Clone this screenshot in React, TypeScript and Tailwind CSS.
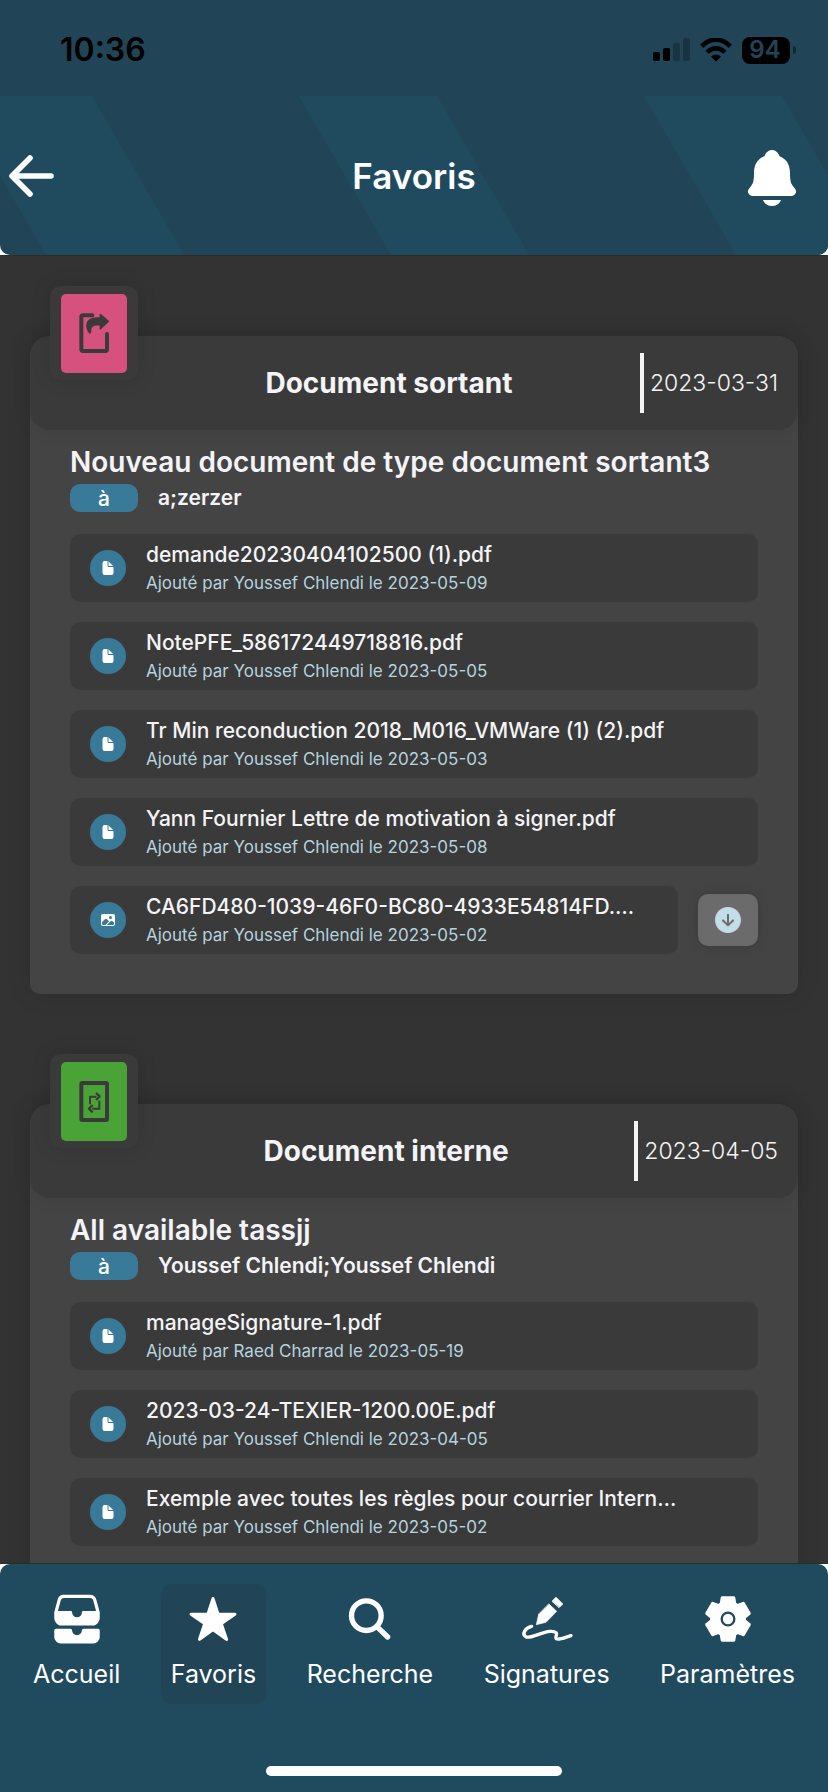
import { type ReactNode } from "react";
import {
  IoArrowDownCircle,
  IoDocument,
  IoFileTrayStacked,
  IoImage,
  IoNotifications,
  IoStar,
} from "react-icons/io5";

type Attachment = { name: string; author: string; date: string; image?: boolean };

type Entry = {
  kind: "outgoing" | "internal";
  label: string;
  date: string;
  title: string;
  recipients: string;
  files: Attachment[];
};

const entries: Entry[] = [
  {
    kind: "outgoing",
    label: "Document sortant",
    date: "2023-03-31",
    title: "Nouveau document de type document sortant3",
    recipients: "a;zerzer",
    files: [
      { name: "demande20230404102500 (1).pdf", author: "Youssef Chlendi", date: "2023-05-09" },
      { name: "NotePFE_586172449718816.pdf", author: "Youssef Chlendi", date: "2023-05-05" },
      { name: "Tr Min reconduction 2018_M016_VMWare (1) (2).pdf", author: "Youssef Chlendi", date: "2023-05-03" },
      { name: "Yann Fournier Lettre de motivation à signer.pdf", author: "Youssef Chlendi", date: "2023-05-08" },
      { name: "CA6FD480-1039-46F0-BC80-4933E54814FD.…", author: "Youssef Chlendi", date: "2023-05-02", image: true },
    ],
  },
  {
    kind: "internal",
    label: "Document interne",
    date: "2023-04-05",
    title: "All available tassjj",
    recipients: "Youssef Chlendi;Youssef Chlendi",
    files: [
      { name: "manageSignature-1.pdf", author: "Raed Charrad", date: "2023-05-19" },
      { name: "2023-03-24-TEXIER-1200.00E.pdf", author: "Youssef Chlendi", date: "2023-04-05" },
      { name: "Exemple avec toutes les règles pour courrier Intern…", author: "Youssef Chlendi", date: "2023-05-02" },
    ],
  },
];

function StatusBar() {
  return (
    <div className="flex h-24 shrink-0 items-center justify-between bg-[#214557] pt-1 pr-8 pl-[60px] text-black">
      <span className="text-[32px] leading-10 font-semibold">10:36</span>
      <div className="flex items-center gap-[10px]">
        <svg className="h-6 w-[37px]" viewBox="0 0 37 24" fill="currentColor" aria-hidden="true">
          <rect x="0" y="14" width="7" height="9" rx="2" />
          <rect x="10" y="10" width="7" height="13" rx="2" />
          <rect x="20" y="5" width="7" height="18" rx="2" opacity="0.25" />
          <rect x="30" y="0" width="7" height="23" rx="2" opacity="0.25" />
        </svg>
        <svg className="h-6 w-8" viewBox="0 0 32 24" fill="none" stroke="currentColor" strokeWidth="4.6" aria-hidden="true">
          <path d="M1.800 8.400C10-.6 22-.6 30.200 8.400" />
          <path d="M7.200 14.400C12.200 9 19.800 9 24.800 14.400" />
          <path d="M16 23.500L11 18.500C14 15.800 18 15.800 21 18.500Z" fill="currentColor" stroke="none" />
        </svg>
        <div className="flex items-center gap-[3px]">
          <span className="flex h-[27px] w-12 items-center justify-center rounded-lg border-r-2 border-black/60 bg-black text-[24px] leading-none font-semibold text-[#214557]">
            94
          </span>
          <span className="h-2 w-[3px] rounded-r-full bg-black/40" />
        </div>
      </div>
    </div>
  );
}

function TopBar() {
  return (
    <header className="relative flex h-[159px] shrink-0 items-center justify-between overflow-hidden rounded-b-[10px] bg-[#214557] text-white">
      <svg className="absolute inset-0 h-full w-full" viewBox="0 0 828 159" preserveAspectRatio="xMidYMid slice" fill="#204b5f" aria-hidden="true">
        <path d="M-46 0H92L184 159H46Z" />
        <path d="M299 0H437L529 159H391Z" />
        <path d="M644 0H782L874 159H736Z" />
      </svg>
      <button type="button" aria-label="Retour" className="relative flex w-24 justify-start pl-[6px]">
        <svg className="size-12" viewBox="0 0 48 48" fill="none" stroke="currentColor" strokeWidth="5.6" strokeLinecap="round" strokeLinejoin="round" aria-hidden="true">
          <path d="M24 6L6 24L24 42M7 24H45" />
        </svg>
      </button>
      <h1 className="relative text-[35px] leading-10 font-semibold">Favoris</h1>
      <button type="button" aria-label="Notifications" className="relative flex w-24 justify-end pt-1 pr-6">
        <IoNotifications className="size-16" />
      </button>
    </header>
  );
}

function KindIcon({ kind }: { kind: Entry["kind"] }) {
  if (kind === "outgoing") {
    return (
      <svg className="h-[79px] w-[66px] rounded-[5px] bg-[#d7517f]" viewBox="0 0 198 237" fill="none" stroke="#3a3a3a" strokeWidth="12" strokeLinecap="round" strokeLinejoin="round" aria-hidden="true">
        <path d="M94 64H66Q61 64 61 69V166Q61 171 66 171H133Q138 171 138 166V120" />
        <path d="M116 60Q117 58 120 60L143 80Q145 82 143 84L120 106Q117 108 116 106V95C98 94 90 98 91 112Q91 120 86 119C74 108 73 90 80 81C87 72 98 70 116 70Z" fill="#3a3a3a" stroke="none" />
      </svg>
    );
  }
  return (
    <svg className="h-[79px] w-[66px] rounded-[5px] bg-[#4aa336]" viewBox="0 0 198 237" fill="none" stroke="#3a3a3a" strokeWidth="12" strokeLinejoin="round" aria-hidden="true">
      <rect x="61" y="63" width="77" height="111" rx="3" />
      <path d="M87 127V104H106M115 116V140H94" strokeWidth="6" />
      <path d="M105 93L116 103L105 114M95 129L84 140L95 151" strokeWidth="7" />
    </svg>
  );
}

function FileRow({ file }: { file: Attachment }) {
  const Icon = file.image ? IoImage : IoDocument;
  return (
    <li className="flex items-center gap-5">
      <a href="#fichier" className="flex h-[68px] min-w-0 flex-1 items-center gap-5 rounded-[10px] bg-[#3a3a3a] px-5">
        <span className="flex size-9 shrink-0 items-center justify-center rounded-full bg-[#3a7a99] text-white">
          <Icon className="size-4" />
        </span>
        <span className="flex min-w-0 flex-col pb-[2px]">
          <span className="truncate text-[21px] leading-8 font-medium text-[#f4f4f6]">{file.name}</span>
          <span className="truncate text-[17px] leading-6 text-[#b5d3de]">
            Ajouté par {file.author} le {file.date}
          </span>
        </span>
      </a>
      {file.image && (
        <button type="button" aria-label="Télécharger" className="flex h-[52px] w-[60px] shrink-0 items-center justify-center rounded-[10px] bg-[#6b6b6b] text-[#c3dde7] shadow-[0_0_12px_rgba(0,0,0,0.12)]">
          <IoArrowDownCircle className="size-8" />
        </button>
      )}
    </li>
  );
}

function EntryCard({ entry }: { entry: Entry }) {
  return (
    <article className="relative rounded-t-[20px] rounded-b-[10px] bg-[#444] shadow-[0_0_24px_rgba(0,0,0,0.12)]">
      <div className="absolute -top-[50px] left-5 z-10 flex h-[94px] w-[88px] items-center justify-center rounded-[10px] bg-[#3a3a3a] shadow-[0_0_20px_rgba(0,0,0,0.12)]">
        <KindIcon kind={entry.kind} />
      </div>
      <div className="flex h-[94px] items-center rounded-[20px] bg-[#3a3a3a] pr-5 pl-[108px] shadow-[0_0_20px_rgba(0,0,0,0.08)]">
        <h2 className="flex-1 text-center text-[28px] leading-9 font-bold text-[#f4f4f8]">{entry.label}</h2>
        <time className="flex h-15 items-center border-l-4 border-[#f4f4f4] pl-[6px] text-[23px] font-light text-[#f4f4f4]">
          {entry.date}
        </time>
      </div>
      <div className="px-10 pt-[14px] pb-10">
        <h3 className="truncate text-[28px] leading-9 font-semibold text-[#f4f4f8]">{entry.title}</h3>
        <div className="mt-1 flex items-center gap-5">
          <span className="flex h-7 w-17 items-center justify-center rounded-[10px] bg-[#3a7a99] text-[21px] leading-none font-medium text-white">à</span>
          <span className="text-[21px] leading-7 font-semibold text-[#f4f4f8]">{entry.recipients}</span>
        </div>
        <ul className="mt-[22px] flex flex-col gap-5">
          {entry.files.map((file) => (
            <FileRow key={file.name} file={file} />
          ))}
        </ul>
      </div>
    </article>
  );
}

function SearchIcon() {
  return (
    <svg className="size-[54px]" viewBox="1015 156 162 162" fill="none" stroke="currentColor" strokeWidth="16" strokeLinecap="round" aria-hidden="true">
      <circle cx="1085" cy="227" r="44.500" />
      <path d="M1119 262L1149 291" />
    </svg>
  );
}

function SignatureIcon() {
  return (
    <svg className="size-[54px]" viewBox="323 156 162 162" fill="currentColor" strokeLinecap="round" strokeLinejoin="round" aria-hidden="true">
      <path d="M420 183L431 172L451 192L441 202Z" stroke="currentColor" strokeWidth="3" />
      <path d="M410 192L433 214L401 247L372 254L379 223Z" stroke="currentColor" strokeWidth="2" />
      <path d="M358 259C338 263 328 283 340 290C356 298 385 276 413 274C433 273 435 280 431 289C426 302 446 298 476 287" fill="none" stroke="currentColor" strokeWidth="10" />
    </svg>
  );
}

const toothAngles = [0, 60, 120];

function GearIcon() {
  return (
    <svg className="size-[54px]" viewBox="-81 -81 162 162" fill="currentColor" aria-hidden="true">
      <circle r="54" />
      {toothAngles.map((angle) => (
        <path
          key={angle}
          transform={`rotate(${angle})`}
          d="M-18 -68H18Q21 -68 22 -64L26 -40V40L22 64Q21 68 18 68H-18Q-21 68 -22 64L-26 40V-40L-22 -64Q-21 -68 -18 -68Z"
        />
      ))}
      <circle r="19" fill="none" stroke="#204b5f" strokeWidth="7" />
    </svg>
  );
}

const tabs: { label: string; icon: ReactNode; active?: boolean }[] = [
  { label: "Accueil", icon: <IoFileTrayStacked className="size-[52px]" /> },
  { label: "Favoris", icon: <IoStar className="size-[50px]" />, active: true },
  { label: "Recherche", icon: <SearchIcon /> },
  { label: "Signatures", icon: <SignatureIcon /> },
  { label: "Paramètres", icon: <GearIcon /> },
];

function TabBar() {
  return (
    <footer className="shrink-0 rounded-t-[10px] bg-[#204b5f] px-[23px] pt-5 pb-4 text-white">
      <nav className="flex justify-between">
        {tabs.map((tab) => (
          <a
            key={tab.label}
            href="#onglet"
            aria-current={tab.active ? "page" : undefined}
            className={
              tab.active
                ? "flex h-30 flex-col items-center gap-[10px] rounded-[10px] bg-[#214557] px-[10px] pt-2"
                : "flex h-30 flex-col items-center gap-[10px] px-[10px] pt-2"
            }
          >
            <span className="flex h-[54px] items-center">{tab.icon}</span>
            <span className="text-[25px] leading-9">{tab.label}</span>
          </a>
        ))}
      </nav>
      <div className="mx-auto mt-[62px] h-[10px] w-[296px] rounded-full bg-white" />
    </footer>
  );
}

export default function App() {
  return (
    <div className="flex h-screen flex-col bg-white font-['Inter',sans-serif]">
      <div className="shrink-0 bg-[linear-gradient(#214557_50%,#fff_50%)]">
        <StatusBar />
        <TopBar />
      </div>
      <main className="min-h-0 flex-1 overflow-y-auto border-y border-[#2b2b2b] bg-[#333] px-[30px] pt-20 [scrollbar-width:none]">
        <div className="flex flex-col gap-[110px]">
          {entries.map((entry) => (
            <EntryCard key={entry.label} entry={entry} />
          ))}
        </div>
      </main>
      <TabBar />
    </div>
  );
}
